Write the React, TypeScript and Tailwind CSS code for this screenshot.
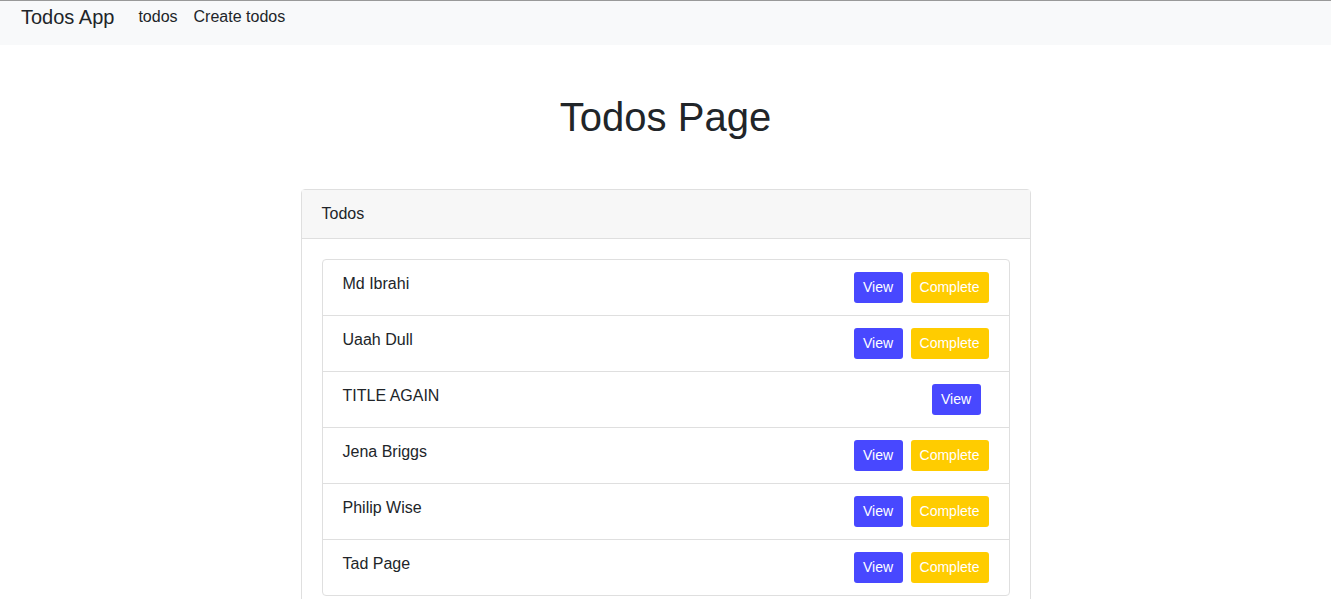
import React from 'react';

interface Todo {
  title: string;
  completed: boolean;
}

const todos: Todo[] = [
  { title: 'Md Ibrahi', completed: false },
  { title: 'Uaah Dull', completed: false },
  { title: 'TITLE AGAIN', completed: true },
  { title: 'Jena Briggs', completed: false },
  { title: 'Philip Wise', completed: false },
  { title: 'Tad Page', completed: false },
];

function TodoRow({ todo, last }: { todo: Todo; last: boolean }) {
  return (
    <li
      className={`flex items-start justify-between px-5 py-3 ${
        last ? '' : 'border-b border-[#dfdfdf]'
      }`}
    >
      <span className="text-base leading-6 text-[#212529]">{todo.title}</span>
      <div className={`flex gap-2 ${todo.completed ? 'mr-2' : ''}`}>
        <button className="h-[31px] w-[49px] rounded-[3px] bg-[#4848ff] pb-[2px] text-sm leading-5 text-white">
          View
        </button>
        {!todo.completed && (
          <button className="h-[31px] w-[78px] rounded-[3px] bg-[#ffcc00] pb-[2px] text-sm leading-5 text-white">
            Complete
          </button>
        )}
      </div>
    </li>
  );
}

export default function App() {
  return (
    <div className="min-h-screen bg-white font-['Liberation_Sans',Arial,sans-serif] text-[#212529]">
      {/* Navbar */}
      <nav className="flex h-[45px] items-start border-t border-[#999] bg-[#f8f9fa] pl-[21px] pt-[4px]">
        <span className="text-[20px] leading-6">Todos App</span>
        <div className="ml-[24px] flex gap-4 pt-[2px] text-base leading-5">
          <a className="cursor-pointer">todos</a>
          <a className="cursor-pointer">Create todos</a>
        </div>
      </nav>

      <h1 className="mt-[48px] text-center text-[40px] leading-[48px]">Todos Page</h1>

      {/* Card */}
      <div className="mx-auto mt-[48px] w-[730px] rounded-[4px] border border-[#dfdfdf]">
        <div className="h-[49px] border-b border-[#dfdfdf] bg-[#f7f7f7] px-5 pt-[12px] text-base leading-6">
          Todos
        </div>
        <div className="p-5">
          <ul className="rounded-[4px] border border-[#dfdfdf]">
            {todos.map((t, i) => (
              <TodoRow key={t.title} todo={t} last={i === todos.length - 1} />
            ))}
          </ul>
        </div>
      </div>
    </div>
  );
}
